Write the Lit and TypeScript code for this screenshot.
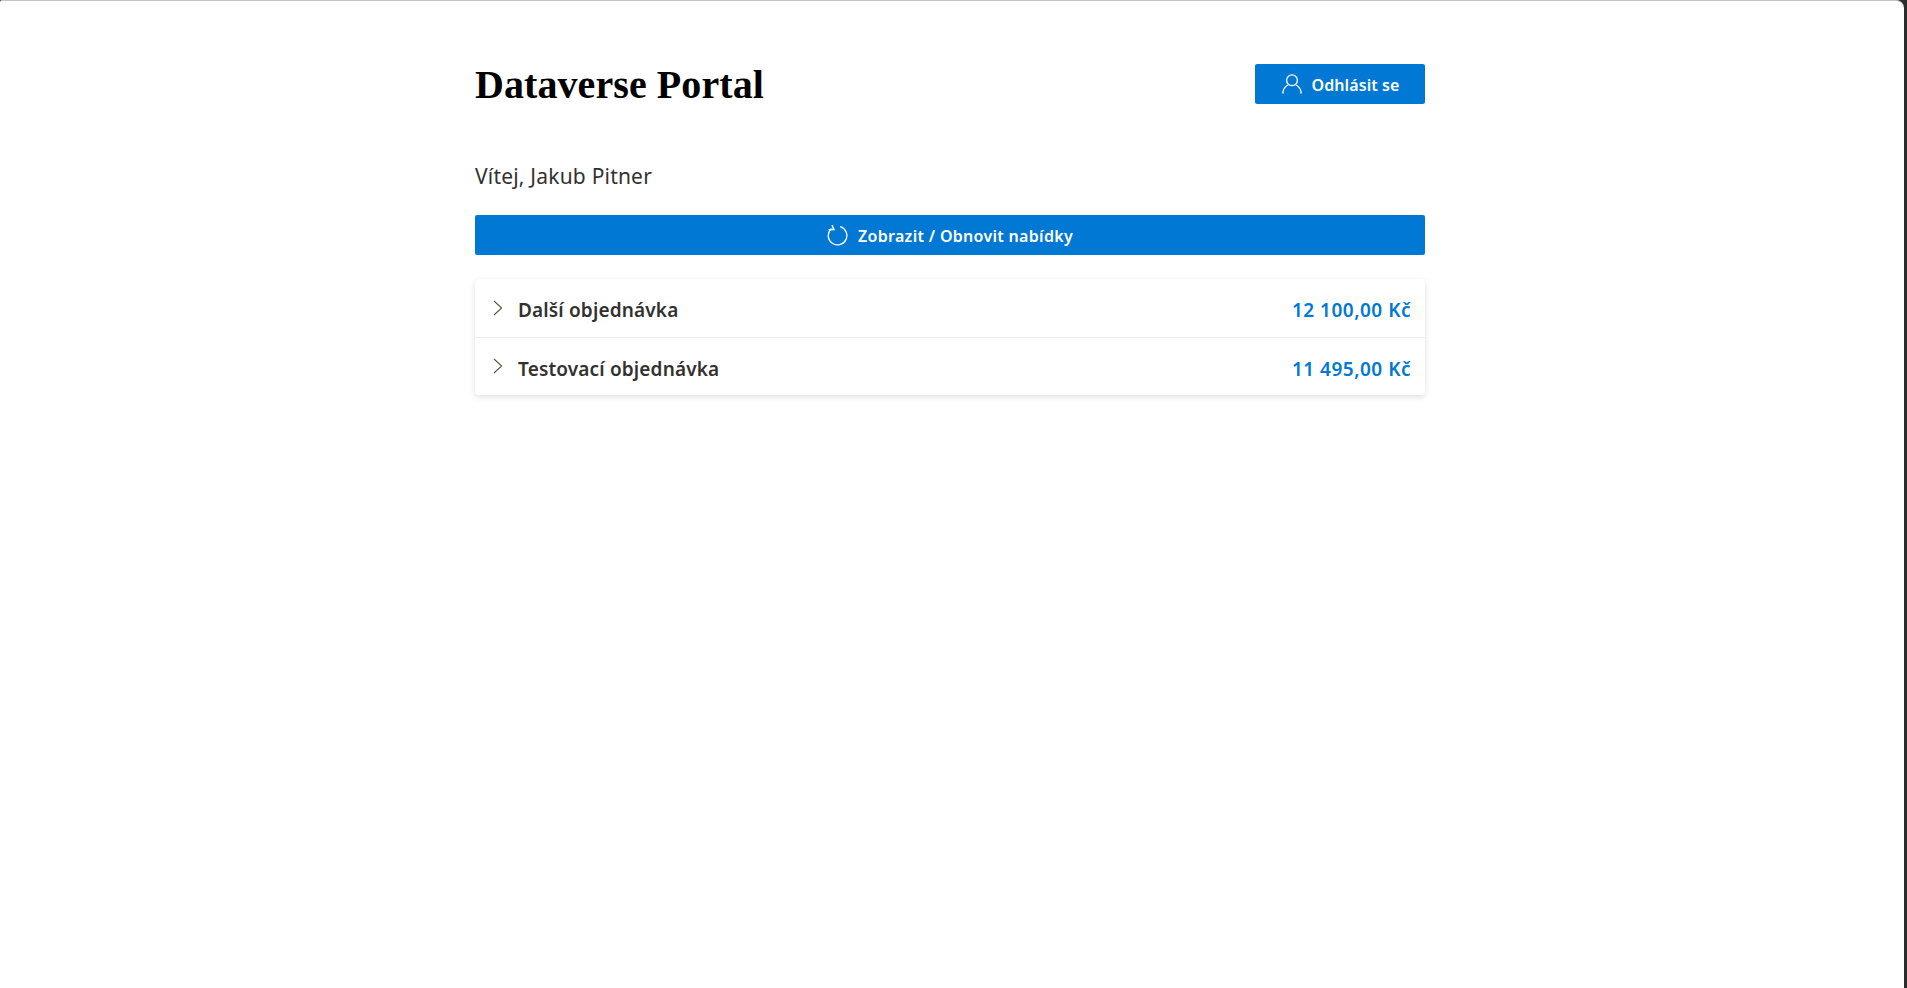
import { LitElement, html, css } from "lit";
import { customElement } from "lit/decorators.js";

const chevron = html`<svg class="chev" viewBox="0 0 10 16" width="10" height="16" fill="none" stroke="#5c5040" stroke-width="1.05"><path d="M1 1 L8.6 8 L1 15"/></svg>`;
const person = html`<svg viewBox="0 0 20 20" width="20" height="20" fill="none" stroke="#fff" stroke-width="1.3"><circle cx="10" cy="6.3" r="5.4"/><path d="M0.8 19.6 C1 15.4 3.2 12.4 6.2 10.8 M19.2 19.6 C19 15.4 16.8 12.4 13.8 10.8"/></svg>`;
const refresh = html`<svg viewBox="0 0 21 21" width="21" height="21" fill="none" stroke="#fff" stroke-width="1.3"><path d="M6.8 4.4 L3.8 4.2 A9.3 9.3 0 1 0 13.2 1.7"/><path d="M5 0.2 L7 4.6 L1.6 4.8" stroke-width="1.4"/></svg>`;

@customElement("app-root")
export class AppRoot extends LitElement {
  static styles = css`
    :host { display: block; height: 988px; background: #2c2c2c; overflow: hidden; }
    .window {
      height: 988px; box-sizing: border-box; margin-right: 3px; background: #fff;
      border-top: 1px solid #c4c4c4; border-top-right-radius: 8px; border-top-left-radius: 2px;
    }
    .main { width: 950px; margin: 0 auto; padding-top: 63px; position: relative; left: -2px; font-family: "Noto Sans", "Open Sans", sans-serif; color: #323130; }
    .header { display: flex; justify-content: space-between; align-items: center; height: 40px; }
    h1 { margin: 0; font: bold 40px "Liberation Serif", serif; color: #000; letter-spacing: 0.08px; }
    .btn {
      display: flex; align-items: center; justify-content: center; gap: 10px; height: 40px;
      box-sizing: border-box; border: 0; border-radius: 2px; background: #0078d4; color: #fff;
      font: 600 16px "Noto Sans", sans-serif; padding: 0;
    }
    .btn span { padding-top: 2px; }
    .logout { width: 170px; letter-spacing: 0.1px; gap: 9px; padding-left: 2px; }
    .welcome { margin: 57px 0 0; font-size: 21px; line-height: 30px; letter-spacing: 0.2px; }
    .refresh { width: 100%; margin-top: 24px; letter-spacing: 0.3px; }
    .card { margin-top: 24px; border-radius: 4px; box-shadow: 0 2px 6px rgba(0,0,0,.13); background: #fff; }
    .row { display: flex; align-items: center; height: 58px; box-sizing: border-box; padding: 2px 14px 0 18px; font-size: 19px; font-weight: 600; letter-spacing: 0.15px; }
    .row span { padding-top: 2px; }
    .row + .row { border-top: 1px solid #edebe9; }
    .chev { margin-right: 15px; margin-top: -3px; }
    .row .amount { margin-left: auto; color: #0078d4; letter-spacing: 0.5px; }
  `;
  render() {
    return html`<div class="window"><div class="main">
      <div class="header">
        <h1>Dataverse Portal</h1>
        <button class="btn logout">${person}<span>Odhlásit se</span></button>
      </div>
      <p class="welcome">Vítej, Jakub Pitner</p>
      <button class="btn refresh">${refresh}<span>Zobrazit / Obnovit nabídky</span></button>
      <div class="card">
        <div class="row">${chevron}<span>Další objednávka</span><span class="amount">12 100,00 Kč</span></div>
        <div class="row">${chevron}<span>Testovací objednávka</span><span class="amount">11 495,00 Kč</span></div>
      </div>
    </div></div>`;
  }
}
